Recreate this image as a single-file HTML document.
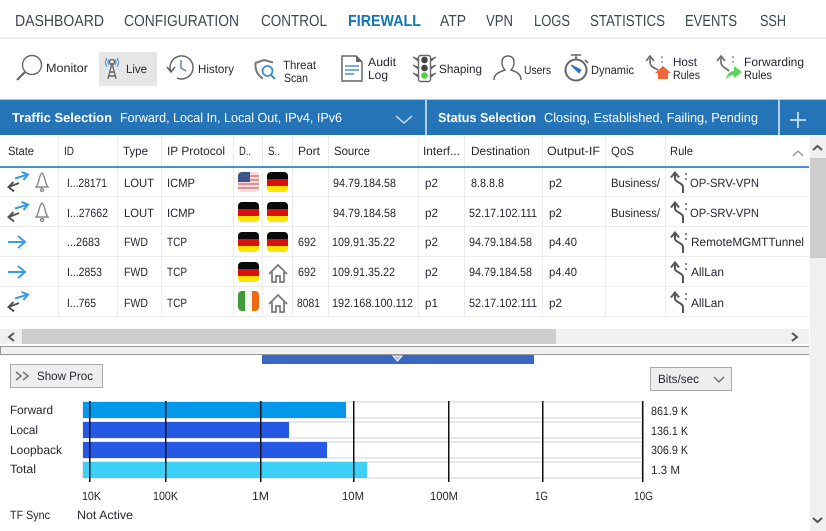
<!DOCTYPE html>
<html><head><meta charset="utf-8"><title>Firewall</title>
<style>
html,body{margin:0;padding:0;background:#fff;width:826px;height:531px;overflow:hidden}
svg{display:block}
text{font-family:"Liberation Sans",sans-serif;font-size:12px;fill:#262633;text-rendering:geometricPrecision}
.n text{font-size:16px;fill:#3d4852}
.w text{font-size:13px;fill:#fff}
.b{font-weight:bold}
</style></head><body>
<svg width="826" height="531" viewBox="0 0 826 531" xmlns="http://www.w3.org/2000/svg">
<defs>
<g id="both" fill="none" stroke-width="2"><path d="M8 6.500L20 2.800" stroke="#2f9be6"/><path d="M14.500 0L21 2.500L16.500 8" stroke="#2f9be6"/><path d="M2 15L12 11" stroke="#555"/><path d="M6.500 10L1.500 15L7 19.500" stroke="#555"/></g>
<g id="bell" fill="none" stroke="#888" stroke-width="1.400"><path d="M7 1C3.500 4 4.500 11 1 15H13C9.500 11 10.500 4 7 1Z"/><circle cx="7" cy="18" r="1.500"/></g>
<path id="arrow" d="M0 7H16M10 1L17 7L10 13" fill="none" stroke="#3b9ce6" stroke-width="2"/>
<g id="de"><rect width="21" height="20" rx="4" fill="#e6d800"/><path d="M0 4a4 4 0 0 1 4-4H17a4 4 0 0 1 4 4V7H0Z" fill="#0a0a0a"/><rect y="7" width="21" height="7" fill="#dd1010"/><path d="M0 14H21V16a4 4 0 0 1-4 4H4a4 4 0 0 1-4-4Z" fill="#fde500"/></g>
<g id="house" fill="none" stroke="#777" stroke-width="1.700"><path d="M1 11L10 2L19 11"/><path d="M4 9V19H8V13H12V19H16V9"/></g>
<g id="split" fill="none" stroke="#555" stroke-width="2"><path d="M5 1V7C5 10 13 11 13 15V21"/><path d="M1 5.500L5 0.500L9 5.500"/><path d="M16 1v2M16 6v2" stroke-width="1.600" stroke="#666"/></g>
</defs>

<!-- nav -->
<g class="n">
<text x="15" y="26" textLength="89" lengthAdjust="spacingAndGlyphs">DASHBOARD</text>
<text x="124" y="26" textLength="115" lengthAdjust="spacingAndGlyphs">CONFIGURATION</text>
<text x="261" y="26" textLength="66" lengthAdjust="spacingAndGlyphs">CONTROL</text>
<text x="348" y="26" textLength="73" lengthAdjust="spacingAndGlyphs" class="b" style="fill:#0f78b4">FIREWALL</text>
<text x="440" y="26" textLength="26" lengthAdjust="spacingAndGlyphs">ATP</text>
<text x="486" y="26" textLength="27" lengthAdjust="spacingAndGlyphs">VPN</text>
<text x="534" y="26" textLength="36" lengthAdjust="spacingAndGlyphs">LOGS</text>
<text x="590" y="26" textLength="75" lengthAdjust="spacingAndGlyphs">STATISTICS</text>
<text x="685" y="26" textLength="52" lengthAdjust="spacingAndGlyphs">EVENTS</text>
<text x="760" y="26" textLength="26" lengthAdjust="spacingAndGlyphs">SSH</text>
</g>
<rect x="0" y="37" width="826" height="2" fill="#eeeeee"/>

<!-- toolbar -->
<rect x="99" y="52" width="58" height="34" fill="#e6e6e6"/>
<g>
<circle cx="32" cy="65" r="9.500" fill="none" stroke="#666" stroke-width="1.400"/><path d="M25 72L17 80" stroke="#666" stroke-width="2.200"/>
<text x="46" y="72" textLength="42" lengthAdjust="spacingAndGlyphs">Monitor</text>

<g fill="none"><path d="M108 79L112 63L116 79M109.500 72H114.500M108.500 76H115.500" stroke="#666" stroke-width="1.400"/><circle cx="112" cy="62" r="2.500" stroke="#666" stroke-width="1.300"/><path d="M107 58C105 61 105 64 107 67M117 58C119 61 119 64 117 67M109 59.500C108 61 108 63 109 65M115 59.500C116 61 116 63 115 65" stroke="#5b9bd5" stroke-width="1.300"/></g>
<text x="126" y="73" textLength="21" lengthAdjust="spacingAndGlyphs">Live</text>

<g fill="none" stroke="#666" stroke-width="1.500"><path d="M171 72A11.500 11.500 0 1 1 177 78"/><path d="M167 67L171 72L175 67"/><path d="M181 60V68L186 71" stroke="#5b86b5"/></g>
<text x="198" y="73" textLength="36" lengthAdjust="spacingAndGlyphs">History</text>

<path d="M264 60L255.500 63C255 70 257 75 263 78.500" fill="none" stroke="#777" stroke-width="2"/><path d="M264 60L273 62.500" fill="none" stroke="#777" stroke-width="2"/>
<circle cx="267.500" cy="71" r="5" fill="none" stroke="#3f8fc6" stroke-width="1.800"/><path d="M271 75L275 79" stroke="#3f8fc6" stroke-width="2"/>
<text x="283" y="69" textLength="33" lengthAdjust="spacingAndGlyphs">Threat</text>
<text x="284" y="82" textLength="24" lengthAdjust="spacingAndGlyphs">Scan</text>

<path d="M342 56H356L362 62V81H342Z" fill="#fff" stroke="#666" stroke-width="1.500"/><path d="M356 55V62H363Z" fill="#666"/>
<path d="M345 66H359M345 70H359M345 74H354" stroke="#4d94cf" stroke-width="1.500"/>
<text x="368" y="66" textLength="28" lengthAdjust="spacingAndGlyphs">Audit</text>
<text x="368" y="79" textLength="20" lengthAdjust="spacingAndGlyphs">Log</text>

<rect x="418.500" y="55.500" width="12" height="26" rx="2" fill="#fff" stroke="#666" stroke-width="1.400"/>
<path d="M413 57L418 61V59ZM436 57L431 61V59ZM413 65L418 69V67ZM436 65L431 69V67ZM413 73L418 77V75ZM436 73L431 77V75Z" fill="#666" stroke="#666"/>
<circle cx="424.500" cy="60" r="3.300" fill="#444"/><circle cx="424.500" cy="68" r="3.300" fill="#444"/><circle cx="424.500" cy="75.500" r="3.300" fill="#5ad13a"/>
<text x="439" y="73" textLength="43" lengthAdjust="spacingAndGlyphs">Shaping</text>

<path d="M494 80C494 74 499 72 505 70C501 66 500 56 508 56C516 56 515 66 511 70C517 72 521 74 521 80" fill="none" stroke="#666" stroke-width="1.500"/>
<text x="524" y="74" textLength="27" lengthAdjust="spacingAndGlyphs">Users</text>

<circle cx="576" cy="70" r="10.500" fill="none" stroke="#666" stroke-width="2"/><path d="M571 55H581M576 55V59M585 60L588 63" stroke="#666" stroke-width="1.600"/><path d="M571 65L579 73L581 70Z" fill="#2f72b8" stroke="#2f72b8"/>
<text x="591" y="74" textLength="43" lengthAdjust="spacingAndGlyphs">Dynamic</text>

<g fill="none" stroke="#666" stroke-width="1.600"><path d="M650 58V62C650 67 655 68 658 70"/><path d="M646 61L650 56L654 61"/></g>
<path d="M662 56v2M662 61v2" stroke="#999" stroke-width="1.600"/>
<path d="M655 73L663 66L671 73H668V79H658V73Z" fill="#f0653a"/>
<text x="673" y="66" textLength="24" lengthAdjust="spacingAndGlyphs">Host</text>
<text x="673" y="79" textLength="27" lengthAdjust="spacingAndGlyphs">Rules</text>

<g fill="none" stroke="#666" stroke-width="1.600"><path d="M721 58V62C721 67 726 68 729 71"/><path d="M717 61L721 56L725 61"/></g>
<path d="M733 56v2M733 61v2" stroke="#999" stroke-width="1.600"/>
<path d="M726 79C727 73 731 71 734 71V66L742 72L734 78V75C731 75 729 76 726 79Z" fill="#5dd35a"/>
<text x="744" y="66" textLength="60" lengthAdjust="spacingAndGlyphs">Forwarding</text>
<text x="744" y="79" textLength="28" lengthAdjust="spacingAndGlyphs">Rules</text>
</g>

<!-- blue selection bar -->
<rect x="0" y="99" width="826" height="36" fill="#2574b8"/>
<rect x="0" y="99" width="826" height="1" fill="#a9c9e4"/>
<rect x="425" y="99" width="2" height="36" fill="#b5d0e8"/>
<rect x="778" y="99" width="2" height="36" fill="#b5d0e8"/>
<g class="w">
<text x="12" y="122" textLength="100" lengthAdjust="spacingAndGlyphs" class="b">Traffic Selection</text>
<text x="120" y="122" textLength="222" lengthAdjust="spacingAndGlyphs">Forward, Local In, Local Out, IPv4, IPv6</text>
<text x="438" y="122" textLength="98" lengthAdjust="spacingAndGlyphs" class="b">Status Selection</text>
<text x="544" y="122" textLength="214" lengthAdjust="spacingAndGlyphs">Closing, Established, Failing, Pending</text>
</g>
<path d="M396 116L404 123L412 116" fill="none" stroke="#b9d3ea" stroke-width="1.600"/>
<path d="M798 112V128M790 120H806" stroke="#b9d3ea" stroke-width="2"/>

<!-- table grid -->
<g fill="#ececec">
<rect x="58" y="136" width="1" height="181"/><rect x="117" y="136" width="1" height="181"/><rect x="161" y="136" width="1" height="181"/><rect x="233" y="136" width="1" height="181"/><rect x="262" y="136" width="1" height="181"/><rect x="292" y="136" width="1" height="181"/><rect x="328" y="136" width="1" height="181"/><rect x="418" y="136" width="1" height="181"/><rect x="464" y="136" width="1" height="181"/><rect x="542" y="136" width="1" height="181"/><rect x="605" y="136" width="1" height="181"/><rect x="665" y="136" width="1" height="181"/>
<rect x="0" y="196" width="809" height="1"/><rect x="0" y="226" width="809" height="1"/><rect x="0" y="256" width="809" height="1"/><rect x="0" y="286" width="809" height="1"/><rect x="0" y="316" width="809" height="1"/>
</g>
<rect x="0" y="166" width="809" height="2" fill="#4a8fcb"/>

<!-- header -->
<g>
<text x="8" y="155" textLength="26" lengthAdjust="spacingAndGlyphs">State</text>
<text x="64" y="155" textLength="10" lengthAdjust="spacingAndGlyphs">ID</text>
<text x="123" y="155" textLength="25" lengthAdjust="spacingAndGlyphs">Type</text>
<text x="167" y="155" textLength="58" lengthAdjust="spacingAndGlyphs">IP Protocol</text>
<text x="239" y="155" textLength="12" lengthAdjust="spacingAndGlyphs">D..</text>
<text x="268" y="155" textLength="12" lengthAdjust="spacingAndGlyphs">S..</text>
<text x="298" y="155" textLength="22" lengthAdjust="spacingAndGlyphs">Port</text>
<text x="334" y="155" textLength="36" lengthAdjust="spacingAndGlyphs">Source</text>
<text x="423" y="155" textLength="37" lengthAdjust="spacingAndGlyphs">Interf...</text>
<text x="471" y="155" textLength="59" lengthAdjust="spacingAndGlyphs">Destination</text>
<text x="547" y="155" textLength="53" lengthAdjust="spacingAndGlyphs">Output-IF</text>
<text x="611" y="155" textLength="23" lengthAdjust="spacingAndGlyphs">QoS</text>
<text x="670" y="155" textLength="23" lengthAdjust="spacingAndGlyphs">Rule</text>
</g>
<path d="M793 156L798 151L803 156" fill="none" stroke="#999" stroke-width="1.500"/>

<!-- row 1 -->
<use href="#both" x="7" y="172"/><use href="#bell" x="35" y="172"/>
<text x="67" y="187" textLength="40" lengthAdjust="spacingAndGlyphs">I...28171</text>
<text x="124" y="187" textLength="30" lengthAdjust="spacingAndGlyphs">LOUT</text>
<text x="167" y="187" textLength="28" lengthAdjust="spacingAndGlyphs">ICMP</text>
<g><rect x="238" y="172" width="21" height="20" rx="4" fill="#f4dcdc"/><path d="M238 176h21M238 180h21M238 184h21M238 188h21" stroke="#d88a8a" stroke-width="1.700"/><path d="M238 176a4 4 0 0 1 4-4H250V182H238Z" fill="#3f5488"/></g>
<use href="#de" x="267" y="172"/>
<text x="333" y="187" textLength="63" lengthAdjust="spacingAndGlyphs">94.79.184.58</text>
<text x="425" y="187" textLength="13" lengthAdjust="spacingAndGlyphs">p2</text>
<text x="471" y="187" textLength="33" lengthAdjust="spacingAndGlyphs">8.8.8.8</text>
<text x="549" y="187" textLength="13" lengthAdjust="spacingAndGlyphs">p2</text>
<text x="611" y="187" textLength="49" lengthAdjust="spacingAndGlyphs">Business/</text>
<use href="#split" x="670" y="172"/>
<text x="690" y="187" textLength="69" lengthAdjust="spacingAndGlyphs">OP-SRV-VPN</text>

<!-- row 2 -->
<use href="#both" x="7" y="202"/><use href="#bell" x="35" y="202"/>
<text x="67" y="217" textLength="41" lengthAdjust="spacingAndGlyphs">I...27662</text>
<text x="124" y="217" textLength="30" lengthAdjust="spacingAndGlyphs">LOUT</text>
<text x="167" y="217" textLength="28" lengthAdjust="spacingAndGlyphs">ICMP</text>
<use href="#de" x="238" y="202"/><use href="#de" x="267" y="202"/>
<text x="333" y="217" textLength="63" lengthAdjust="spacingAndGlyphs">94.79.184.58</text>
<text x="425" y="217" textLength="13" lengthAdjust="spacingAndGlyphs">p2</text>
<text x="469" y="217" textLength="68" lengthAdjust="spacingAndGlyphs">52.17.102.111</text>
<text x="549" y="217" textLength="13" lengthAdjust="spacingAndGlyphs">p2</text>
<text x="611" y="217" textLength="49" lengthAdjust="spacingAndGlyphs">Business/</text>
<use href="#split" x="670" y="202"/>
<text x="690" y="217" textLength="69" lengthAdjust="spacingAndGlyphs">OP-SRV-VPN</text>

<!-- row 3 -->
<use href="#arrow" x="8" y="235"/>
<text x="67" y="246" textLength="33" lengthAdjust="spacingAndGlyphs">...2683</text>
<text x="124" y="246" textLength="24" lengthAdjust="spacingAndGlyphs">FWD</text>
<text x="167" y="246" textLength="20" lengthAdjust="spacingAndGlyphs">TCP</text>
<use href="#de" x="238" y="232"/><use href="#de" x="267" y="232"/>
<text x="298" y="246" textLength="18" lengthAdjust="spacingAndGlyphs">692</text>
<text x="332" y="246" textLength="63" lengthAdjust="spacingAndGlyphs">109.91.35.22</text>
<text x="425" y="246" textLength="13" lengthAdjust="spacingAndGlyphs">p2</text>
<text x="469" y="246" textLength="63" lengthAdjust="spacingAndGlyphs">94.79.184.58</text>
<text x="549" y="246" textLength="28" lengthAdjust="spacingAndGlyphs">p4.40</text>
<use href="#split" x="670" y="232"/>
<text x="691" y="246" textLength="113" lengthAdjust="spacingAndGlyphs">RemoteMGMTTunnel</text>

<!-- row 4 -->
<use href="#arrow" x="8" y="265"/>
<text x="67" y="276" textLength="35" lengthAdjust="spacingAndGlyphs">I...2853</text>
<text x="124" y="276" textLength="24" lengthAdjust="spacingAndGlyphs">FWD</text>
<text x="167" y="276" textLength="20" lengthAdjust="spacingAndGlyphs">TCP</text>
<use href="#de" x="238" y="262"/><use href="#house" x="268" y="263"/>
<text x="298" y="276" textLength="18" lengthAdjust="spacingAndGlyphs">692</text>
<text x="332" y="276" textLength="63" lengthAdjust="spacingAndGlyphs">109.91.35.22</text>
<text x="425" y="276" textLength="13" lengthAdjust="spacingAndGlyphs">p2</text>
<text x="469" y="276" textLength="63" lengthAdjust="spacingAndGlyphs">94.79.184.58</text>
<text x="549" y="276" textLength="28" lengthAdjust="spacingAndGlyphs">p4.40</text>
<use href="#split" x="670" y="262"/>
<text x="691" y="276" textLength="33" lengthAdjust="spacingAndGlyphs">AllLan</text>

<!-- row 5 -->
<use href="#both" x="7" y="292"/>
<text x="67" y="307" textLength="29" lengthAdjust="spacingAndGlyphs">I...765</text>
<text x="124" y="307" textLength="24" lengthAdjust="spacingAndGlyphs">FWD</text>
<text x="167" y="307" textLength="20" lengthAdjust="spacingAndGlyphs">TCP</text>
<g><rect x="238" y="291" width="21" height="20" rx="4" fill="#f7f7f3"/><path d="M238 295a4 4 0 0 1 4-4H245V311H242a4 4 0 0 1-4-4Z" fill="#3f9a3a"/><path d="M252 291H255a4 4 0 0 1 4 4V307a4 4 0 0 1-4 4H252Z" fill="#ee6a10"/></g>
<use href="#house" x="268" y="293"/>
<text x="297" y="307" textLength="23" lengthAdjust="spacingAndGlyphs">8081</text>
<text x="332" y="307" textLength="81" lengthAdjust="spacingAndGlyphs">192.168.100.112</text>
<text x="425" y="307" textLength="13" lengthAdjust="spacingAndGlyphs">p1</text>
<text x="469" y="307" textLength="68" lengthAdjust="spacingAndGlyphs">52.17.102.111</text>
<text x="549" y="307" textLength="13" lengthAdjust="spacingAndGlyphs">p2</text>
<use href="#split" x="670" y="292"/>
<text x="691" y="307" textLength="33" lengthAdjust="spacingAndGlyphs">AllLan</text>

<!-- horizontal scrollbar -->
<rect x="0" y="329" width="809" height="15" fill="#f0f0f0"/>
<rect x="22" y="329" width="534" height="15" fill="#cdcdcd"/>
<path d="M14 333L9 337L14 341" fill="none" stroke="#555" stroke-width="2"/>
<path d="M792 333L797 337L792 341" fill="none" stroke="#555" stroke-width="2"/>

<!-- splitter -->
<rect x="0" y="346" width="809" height="8" fill="#f0f0f0"/>
<rect x="0" y="346" width="809" height="1" fill="#999"/>
<rect x="0" y="354" width="809" height="1" fill="#999"/>
<rect x="0" y="346" width="1" height="9" fill="#999"/>
<rect x="262" y="355" width="272" height="9" fill="#3a67c4"/>
<path d="M393 356H402L397.500 361Z" fill="#a9bde6" stroke="#fff"/>

<!-- vertical scrollbar -->
<rect x="810" y="136" width="16" height="395" fill="#f0f0f0"/>
<rect x="810" y="158" width="16" height="100" fill="#cdcdcd"/>
<path d="M813 150L817.500 146L822 150" fill="none" stroke="#555" stroke-width="2"/>
<path d="M813 518L817.500 522L822 518" fill="none" stroke="#555" stroke-width="2"/>

<!-- buttons -->
<rect x="10.500" y="364.500" width="92" height="23" fill="#eeeeee" stroke="#aaaaaa"/>
<path d="M16 372L21 376L16 380M23 372L28 376L23 380" fill="none" stroke="#777" stroke-width="1.600"/>
<text x="37" y="380" textLength="56" lengthAdjust="spacingAndGlyphs">Show Proc</text>
<rect x="650.500" y="367.500" width="81" height="23" fill="#eeeeee" stroke="#aaaaaa"/>
<text x="658" y="383" textLength="41" lengthAdjust="spacingAndGlyphs">Bits/sec</text>
<path d="M714 377L719 382L724 377" fill="none" stroke="#666" stroke-width="1.300"/>

<!-- bars -->
<g fill="#fff" stroke="#e8e8e8" stroke-width="2">
<rect x="83" y="402" width="559" height="16"/><rect x="83" y="422" width="559" height="16"/><rect x="83" y="442" width="559" height="16"/><rect x="83" y="462" width="559" height="16"/>
</g>
<rect x="83" y="402" width="263" height="16" fill="#0498ea"/>
<rect x="83" y="422" width="206" height="16" fill="#2558e4"/>
<rect x="83" y="442" width="244" height="16" fill="#2558e4"/>
<rect x="83" y="462" width="284" height="16" fill="#3dd0f6"/>
<g fill="#111">
<rect x="89" y="401" width="1.500" height="81"/><rect x="165" y="401" width="1.500" height="81"/><rect x="260" y="401" width="1.500" height="81"/><rect x="353" y="401" width="1.500" height="81"/><rect x="448" y="401" width="1.500" height="81"/><rect x="542" y="401" width="1.500" height="81"/><rect x="642" y="401" width="1.500" height="81"/>
</g>
<text x="10" y="414" textLength="43" lengthAdjust="spacingAndGlyphs">Forward</text>
<text x="10" y="434" textLength="28" lengthAdjust="spacingAndGlyphs">Local</text>
<text x="10" y="454" textLength="52" lengthAdjust="spacingAndGlyphs">Loopback</text>
<text x="10" y="473" textLength="26" lengthAdjust="spacingAndGlyphs">Total</text>
<text x="651" y="415" textLength="37" lengthAdjust="spacingAndGlyphs">861.9 K</text>
<text x="651" y="435" textLength="37" lengthAdjust="spacingAndGlyphs">136.1 K</text>
<text x="651" y="454" textLength="37" lengthAdjust="spacingAndGlyphs">306.9 K</text>
<text x="651" y="474" textLength="29" lengthAdjust="spacingAndGlyphs">1.3 M</text>
<text x="82" y="500" textLength="19" lengthAdjust="spacingAndGlyphs">10K</text>
<text x="153" y="500" textLength="25" lengthAdjust="spacingAndGlyphs">100K</text>
<text x="252" y="500" textLength="17" lengthAdjust="spacingAndGlyphs">1M</text>
<text x="342" y="500" textLength="22" lengthAdjust="spacingAndGlyphs">10M</text>
<text x="430" y="500" textLength="28" lengthAdjust="spacingAndGlyphs">100M</text>
<text x="535" y="500" textLength="13" lengthAdjust="spacingAndGlyphs">1G</text>
<text x="634" y="500" textLength="19" lengthAdjust="spacingAndGlyphs">10G</text>
<text x="10" y="519" textLength="40" lengthAdjust="spacingAndGlyphs">TF Sync</text>
<text x="77" y="519" textLength="56" lengthAdjust="spacingAndGlyphs">Not Active</text>
</svg>
</body></html>
